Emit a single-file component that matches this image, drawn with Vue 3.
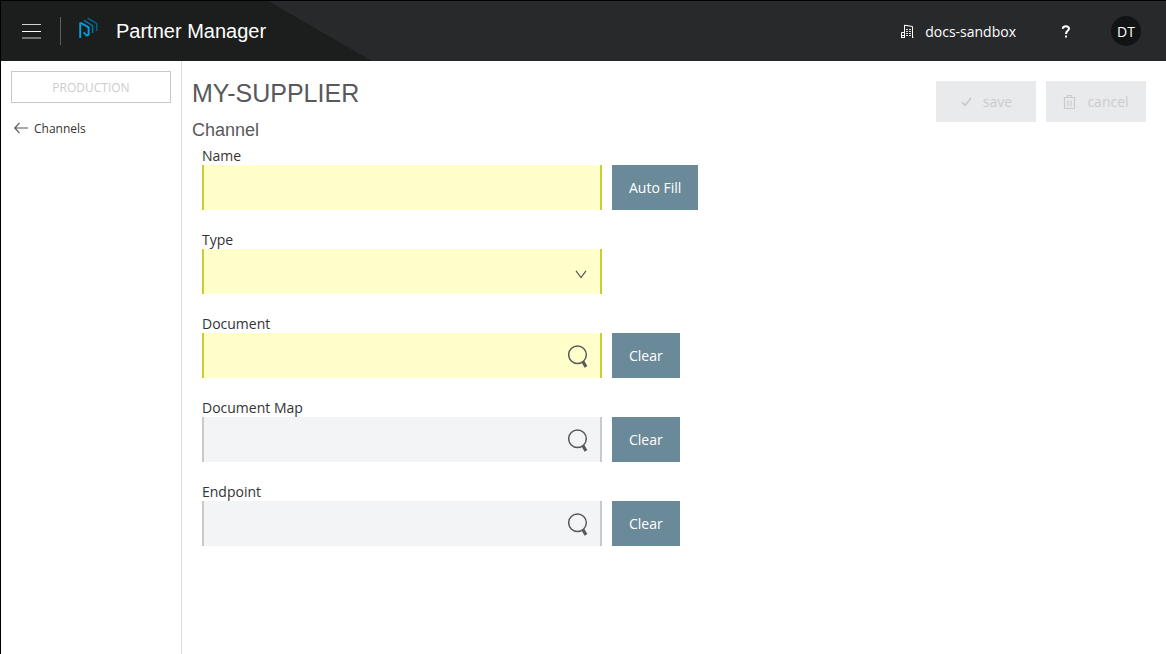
<script setup>
import { reactive } from 'vue'

const fields = reactive([
  { id: 'name', label: 'Name', kind: 'text', required: true, action: 'Auto Fill', value: '' },
  { id: 'type', label: 'Type', kind: 'select', required: true, action: '', value: '' },
  { id: 'document', label: 'Document', kind: 'search', required: true, action: 'Clear', value: '' },
  { id: 'document-map', label: 'Document Map', kind: 'search', required: false, action: 'Clear', value: '' },
  { id: 'endpoint', label: 'Endpoint', kind: 'search', required: false, action: 'Clear', value: '' },
])

function runAction(field) {
  field.value = field.action === 'Clear' ? '' : 'MY-SUPPLIER'
}
</script>

<template>
  <div class="app">
    <header class="topbar">
      <svg class="wedge" viewBox="0 0 372 60" aria-hidden="true">
        <path d="M0 0H267L371 60H0z" fill="#1c1e1d" />
      </svg>
      <button class="menu" type="button" aria-label="Menu">
        <svg width="20" height="16" viewBox="0 0 20 16" fill="none" stroke="#fff">
          <path d="M0 8.5h19" />
          <path d="M0 1.5h19M0 15h19" stroke="#d0d0d0" />
        </svg>
      </button>
      <span class="divider"></span>
      <svg class="logo" width="20" height="22" viewBox="0 0 20 22" fill="none" stroke-width="1.6">
        <path d="M8.5 1.2L17.7 6.4V14" stroke="#075f84" />
        <path d="M4.8 3.4L13.6 8.6V16" stroke="#0572a0" />
        <path d="M1.2 21V6.4L2.4 6.2L9.6 10.4V17.4L7.8 18.6L4.6 15.4" stroke="#05a0dd" stroke-width="1.9" />
      </svg>
      <span class="brand">Partner Manager</span>
      <div class="account">
        <button class="tenant" type="button">
          <svg width="14" height="15" viewBox="0 0 14 15" fill="none" stroke="#fff">
            <path d="M1.5 14V8.5H4.5M4.5 13.5V1.2L12.5 2.5V13.5M1 13.5H5M12 13.5H13.5" />
            <path d="M4 1.5H8M2 11.5h2" />
            <path d="M6 5.5h2M9 5.5h2M6 7.5h2M9 7.5h2M6 9.5h2M9 9.5h2M6 11.5h2M9 11.5h2" opacity=".85" />
          </svg>
          <span>docs-sandbox</span>
        </button>
        <button class="help" type="button" aria-label="Help">
          <svg width="10" height="13" viewBox="0 0 10 13" fill="none">
            <path d="M1.8 3.8C1.8 .4 8 .4 8 3.6C8 6 5 5.8 5 9" stroke="#fff" stroke-width="2" />
            <path d="M4 10.5h2v2H4z" fill="#fff" />
          </svg>
        </button>
        <button class="avatar" type="button">DT</button>
      </div>
    </header>

    <div class="body">
      <nav class="sidebar">
        <button class="env" type="button" disabled>PRODUCTION</button>
        <a class="back" href="#channels">
          <svg width="14" height="14" viewBox="0 0 14 14" fill="none" stroke="#555" stroke-width="1.2">
            <path d="M.8 6H14M5.5 .8L.8 6L5.5 11.2" />
          </svg>
          Channels
        </a>
      </nav>

      <main class="content">
        <div class="heading">
          <h1>MY-SUPPLIER</h1>
          <div class="actions">
            <button type="button" disabled>
              <svg width="12" height="10" viewBox="0 0 12 10" fill="none" stroke="currentColor" stroke-width="2">
                <path d="M2.2 5.5L5.2 8.3L11 1" />
              </svg>
              save
            </button>
            <button type="button" disabled>
              <svg width="13" height="14" viewBox="0 0 13 14" fill="none" stroke="currentColor">
                <path d="M.5 2.5h12M4.5 2V.5h4V2M1.5 3v10.5h10V3M5 5.5v6M8 5.5v6" stroke-width="1.2" />
              </svg>
              cancel
            </button>
          </div>
        </div>
        <h2>Channel</h2>
        <form @submit.prevent>
          <div v-for="field in fields" :key="field.id" class="field">
            <label :for="field.id">{{ field.label }}</label>
            <div class="row">
              <div class="control" :class="{ required: field.required }">
                <select v-if="field.kind === 'select'" :id="field.id" v-model="field.value">
                  <option value=""></option>
                </select>
                <input v-else :id="field.id" v-model="field.value" type="text" />
                <svg v-if="field.kind === 'select'" class="chevron" width="12" height="9" viewBox="0 0 12 9" fill="none" stroke="#555" stroke-width="1.2">
                  <path d="M1 .8L6 7.5L11 .8" />
                </svg>
                <button v-if="field.kind === 'search'" class="search" type="button" :aria-label="`Search ${field.label}`">
                  <svg width="20" height="24" viewBox="0 0 20 24" fill="none" stroke="#58595b">
                    <circle cx="9.5" cy="10.8" r="8.8" stroke-width="1.5" />
                    <path d="M14.8 17.5L18 22.8" stroke-width="3.2" />
                  </svg>
                </button>
              </div>
              <button v-if="field.action" class="primary" type="button" @click="runAction(field)">{{ field.action }}</button>
            </div>
          </div>
        </form>
      </main>
    </div>
  </div>
</template>

<style>
html,
body,
#app {
  height: 100%;
}
</style>

<style scoped>
.app {
  box-sizing: border-box;
  min-height: 100%;
  display: flex;
  flex-direction: column;
  border-top: 1px solid #000;
  border-left: 1px solid #000;
  background: #fff;
  color: #333;
  font-family: "Open Sans", "Noto Sans", sans-serif;
  font-size: 14px;
}
button {
  margin: 0;
  padding: 0;
  border: 0;
  background: none;
  color: inherit;
  font: inherit;
}
svg {
  display: block;
  flex: none;
}
.topbar {
  position: relative;
  height: 60px;
  display: flex;
  align-items: center;
  background: #28292b;
  color: #fff;
}
.wedge {
  position: absolute;
  top: 0;
  left: 0;
  height: 100%;
}
.menu,
.divider,
.logo,
.brand,
.account {
  position: relative;
}
.menu {
  margin-left: 21px;
}
.divider {
  width: 1px;
  height: 28px;
  margin: 0 18px;
  background: #5c5e5d;
}
.logo {
  margin-bottom: 6px;
}
.brand {
  margin-left: 17px;
  font: 20px/24px "Liberation Sans", Arial, sans-serif;
}
.account {
  margin-left: auto;
  margin-right: 25px;
  display: flex;
  align-items: center;
}
.tenant {
  display: flex;
  align-items: center;
  gap: 11px;
}
.help {
  margin: 0 40px 0 45px;
}
.avatar {
  width: 30px;
  height: 30px;
  border-radius: 50%;
  background: #121314;
}
.body {
  flex: 1;
  display: flex;
}
.sidebar {
  box-sizing: border-box;
  width: 181px;
  flex: none;
  padding: 10px;
  border-right: 1px solid #ddd;
  font-size: 12px;
}
.env {
  box-sizing: border-box;
  width: 100%;
  height: 32px;
  border: 1px solid #c8c8c8;
  color: #ccc;
}
.back {
  display: flex;
  align-items: center;
  gap: 6px;
  margin-top: 16px;
  padding-left: 3px;
  line-height: 20px;
  color: #333;
  text-decoration: none;
}
.content {
  flex: 1;
  padding: 20px 20px 20px 10px;
}
.heading {
  display: flex;
  justify-content: space-between;
  height: 38px;
}
h1,
h2 {
  margin: 0;
  font-family: "Liberation Sans", Arial, sans-serif;
  font-weight: 400;
  color: #58595b;
}
h1 {
  font-size: 25px;
  line-height: 24px;
}
h2 {
  font-size: 18px;
  line-height: 22px;
}
.actions {
  display: flex;
  gap: 10px;
}
.actions button {
  display: flex;
  align-items: center;
  justify-content: center;
  gap: 11px;
  width: 100px;
  height: 41px;
  background: #e9eaec;
  color: #ccc;
}
form {
  display: flex;
  flex-direction: column;
  gap: 20px;
  padding: 5px 10px;
}
label {
  display: block;
  line-height: 19px;
}
.row {
  display: flex;
  gap: 10px;
}
.control {
  box-sizing: border-box;
  position: relative;
  display: flex;
  width: 400px;
  height: 45px;
  border: solid #c8c9cb;
  border-width: 0 2px;
  background: #f3f4f6;
}
.control.required {
  border-color: #cccc33;
  background: #ffffcc;
}
input,
select {
  flex: 1;
  min-width: 0;
  padding: 0 10px;
  border: 0;
  border-radius: 0;
  background: transparent;
  appearance: none;
  font: inherit;
  color: inherit;
}
.chevron {
  position: absolute;
  right: 13px;
  top: 21px;
  pointer-events: none;
}
.search {
  margin-right: 12px;
}
.primary {
  padding: 0 17px;
  background: #6b8a99;
  color: #fff;
}
</style>
